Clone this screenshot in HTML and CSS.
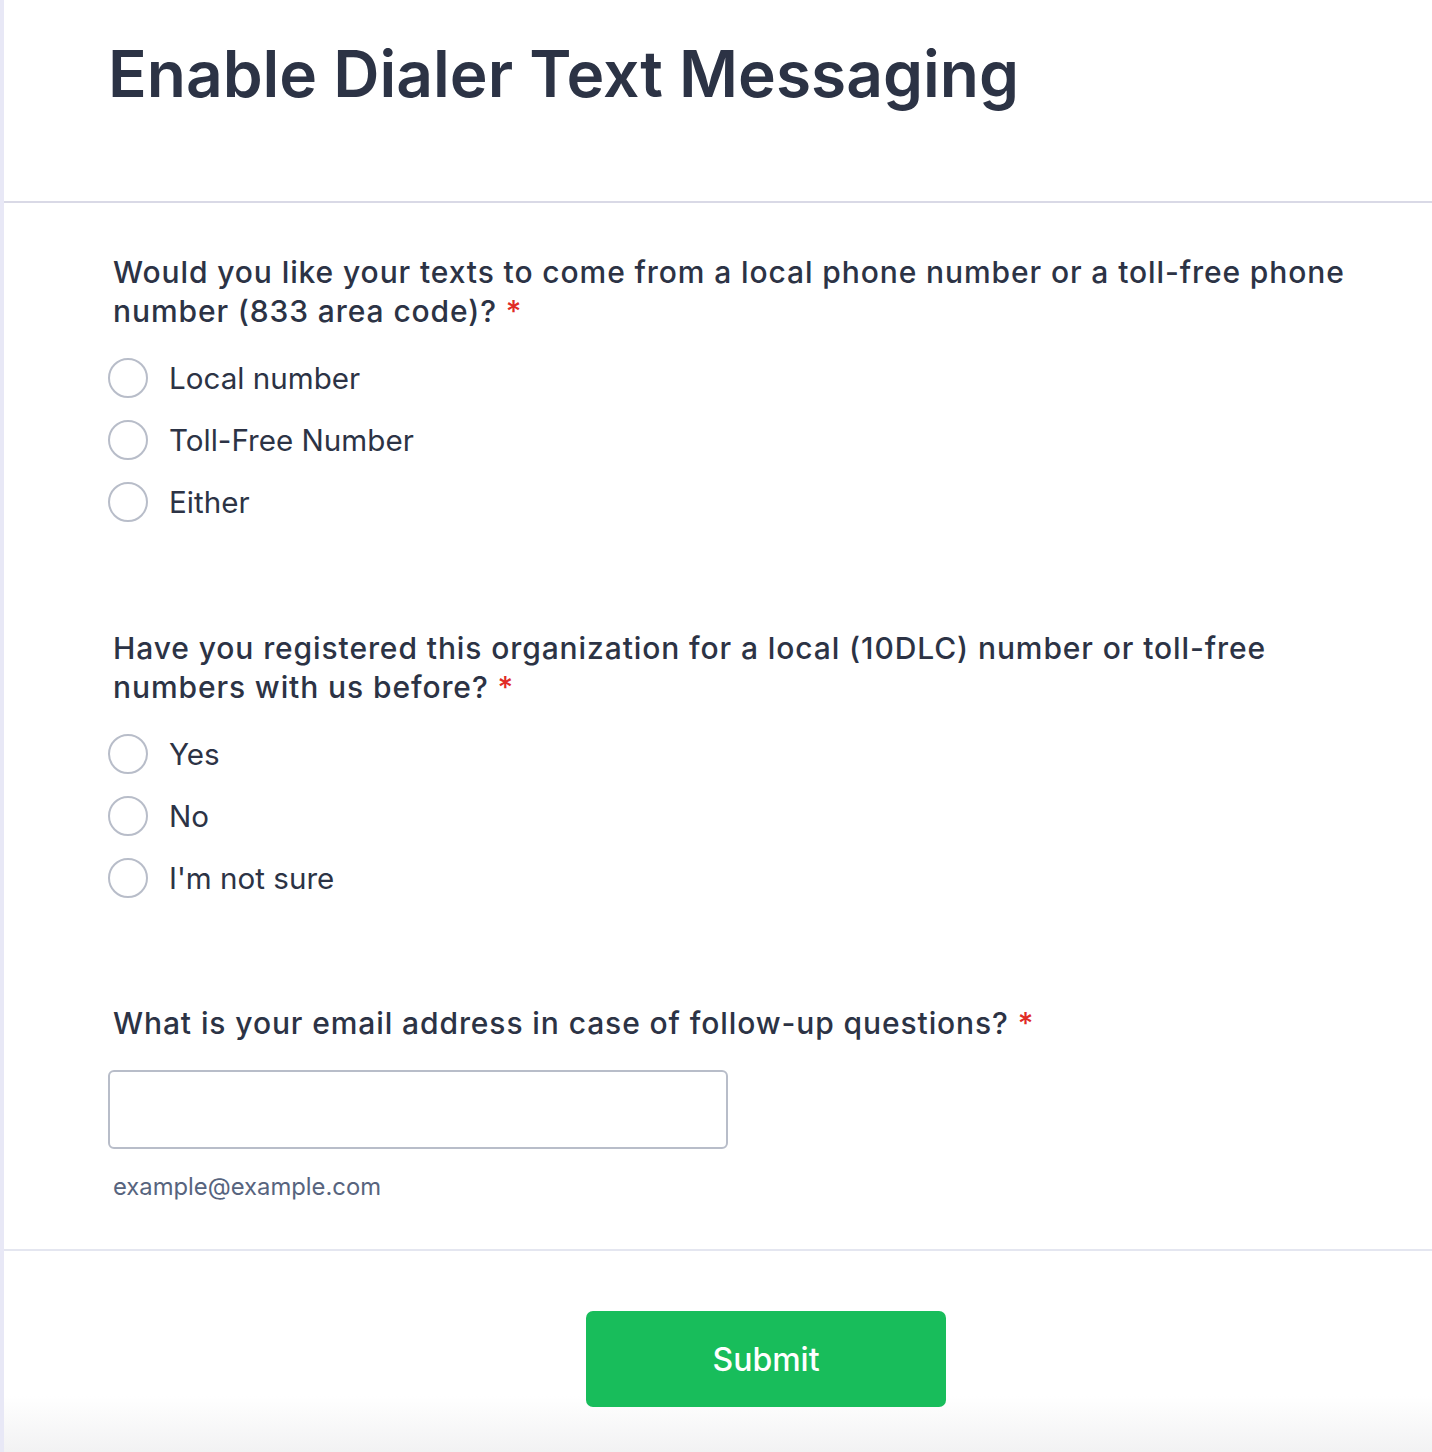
FILE: index.html
```html
<!DOCTYPE html>
<html lang="en">
<head>
<meta charset="utf-8">
<title>Enable Dialer Text Messaging</title>
<link rel="stylesheet" href="styles.css">
</head>
<body>
<div class="page">
  <header class="form-header">
    <h1 class="form-title">Enable Dialer Text Messaging</h1>
  </header>
  <main class="form-body">
    <fieldset class="question">
      <legend class="question-label">Would you like your texts to come from a local phone number or a toll-free phone number (833 area code)? <span class="req">*</span></legend>
      <div class="options">
        <label class="option"><input type="radio" name="q1" class="radio"><span>Local number</span></label>
        <label class="option"><input type="radio" name="q1" class="radio"><span>Toll-Free Number</span></label>
        <label class="option"><input type="radio" name="q1" class="radio"><span>Either</span></label>
      </div>
    </fieldset>
    <fieldset class="question">
      <legend class="question-label">Have you registered this organization for a local (10DLC) number or toll-free numbers with us before? <span class="req">*</span></legend>
      <div class="options">
        <label class="option"><input type="radio" name="q2" class="radio"><span>Yes</span></label>
        <label class="option"><input type="radio" name="q2" class="radio"><span>No</span></label>
        <label class="option"><input type="radio" name="q2" class="radio"><span>I'm not sure</span></label>
      </div>
    </fieldset>
    <div class="question question-last">
      <label class="question-label" for="email">What is your email address in case of follow-up questions? <span class="req">*</span></label>
      <input id="email" type="email" class="text-input">
      <div class="helper">example@example.com</div>
    </div>
  </main>
  <footer class="form-footer">
    <button type="submit" class="submit">Submit</button>
  </footer>
</div>
</body>
</html>
```

FILE: styles.css
```css
* { box-sizing: border-box; }

html, body {
  margin: 0;
  padding: 0;
  background: #ffffff;
}

body {
  font-family: Inter, "Noto Sans", "Liberation Sans", sans-serif;
  color: #2c3345;
}

.page {
  border-left: 4px solid #e8e8f6;
  min-height: 1452px;
  display: flex;
  flex-direction: column;
}

.form-header {
  height: 203px;
  padding: 35px 0 0 104px;
  border-bottom: 2px solid #d9d9e6;
}

.form-title {
  margin: 0;
  font-size: 64px;
  line-height: 77px;
  font-weight: 600;
  color: #2c3345;
}

.form-body {
  padding: 50px 60px 47px 104px;
  border-bottom: 2px solid #e4e6f0;
  display: flex;
  flex-direction: column;
  gap: 107px;
}

.question {
  border: 0;
  margin: 0;
  padding: 0;
  min-width: 0;
  display: flex;
  flex-direction: column;
}

.question-label {
  display: block;
  padding: 0 0 0 5px;
  font-size: 30px;
  line-height: 39px;
  font-weight: 500;
  letter-spacing: 0.9px;
  color: #2c3345;
  margin-bottom: 27px;
}

.req {
  color: #e02b27;
}

.options {
  display: flex;
  flex-direction: column;
  gap: 22px;
}

.option {
  display: flex;
  align-items: center;
  gap: 21px;
  font-size: 29.6px;
  line-height: 40px;
  font-weight: 400;
  color: #2c3345;
}

.radio {
  appearance: none;
  -webkit-appearance: none;
  margin: 0;
  width: 40px;
  height: 40px;
  border: 2px solid #b8bdc9;
  border-radius: 50%;
  background: #fff;
  flex: none;
}

.question-last {
  margin-top: -1px;
}

.text-input {
  width: 620px;
  height: 79px;
  margin: 0;
  border: 2px solid #b8bdc9;
  border-radius: 6px;
  background: #fff;
  font-family: inherit;
  font-size: 28px;
}

.helper {
  margin-top: 23px;
  padding-left: 5px;
  font-size: 23.8px;
  line-height: 30px;
  color: #57647e;
}

.form-footer {
  flex: 1;
  display: flex;
  justify-content: center;
  align-items: flex-start;
  padding: 60px 0 0 96px;
  background: linear-gradient(to bottom, #ffffff 0, #ffffff 145px, #f2f2f3 100%);
}

.submit {
  width: 360px;
  height: 96px;
  border: 0;
  border-radius: 7px;
  background: #18bd5b;
  color: #ffffff;
  font-family: inherit;
  font-size: 32px;
  font-weight: 500;
}
```
